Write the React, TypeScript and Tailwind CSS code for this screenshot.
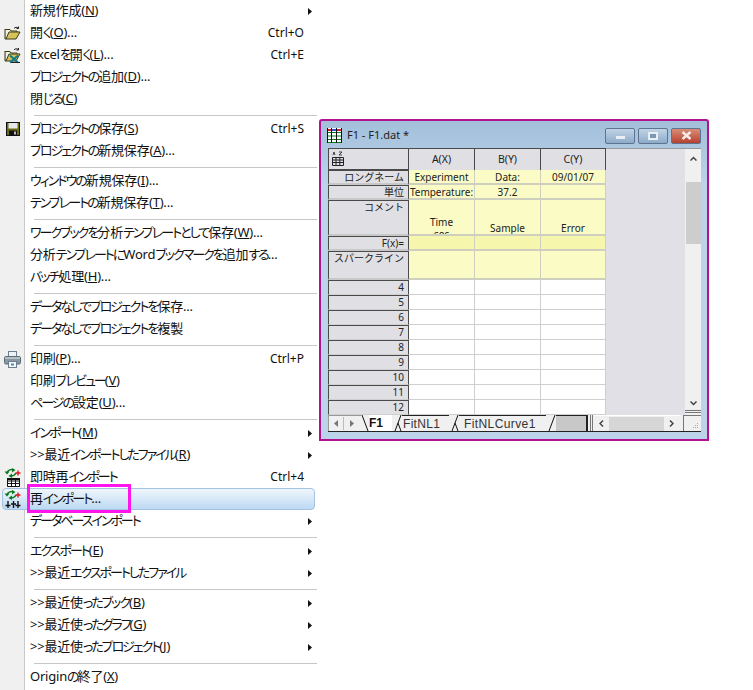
import React from "react";

type Item =
  | { sep: true }
  | { sep?: false; label: string; key2?: string; arrow?: boolean; icon?: React.ReactNode; active?: boolean };

const Folder = () => (
  <svg width="17" height="14" viewBox="0 0 17 14" className="shrink-0">
    <path d="M1 3.5h5l1 1.5h6v2" fill="#fff6b0" stroke="#3a3a10" />
    <path d="M1 3v10h11l4-7H5L2 13" fill="#d6c25a" stroke="#3a3a10" />
    <path d="M10 2.5c1-1.5 3-1.5 4.5-.5M14.5 0.5v2h-2" fill="none" stroke="#222" />
  </svg>
);
const ExcelFolder = () => (
  <svg width="17" height="17" viewBox="0 0 17 17" className="shrink-0">
    <path d="M1 4.5h5l1 1.5h6v2" fill="#fff6b0" stroke="#3a3a10" />
    <path d="M1 4v10h11l4-7H5L2 14" fill="#d6c25a" stroke="#3a3a10" />
    <path d="M10 3c1-1.5 3-1.5 4.5-.5M14.5 1v2h-2" fill="none" stroke="#222" />
    <path d="M6 8.5l8 7M14 8.5l-8 7" stroke="#0d7c8a" strokeWidth="2" />
    <path d="M7 15.5h9" stroke="#222" />
  </svg>
);
const Floppy = () => (
  <svg width="14" height="14" viewBox="0 0 14 14" className="shrink-0">
    <rect x="0.5" y="0.5" width="13" height="13" fill="#6b6b10" stroke="#111" />
    <rect x="2.5" y="1" width="9" height="5.5" fill="#e8e8e8" />
    <rect x="3" y="8.5" width="8" height="5" fill="#111" />
    <rect x="8" y="9.5" width="2" height="3" fill="#bbb" />
  </svg>
);
const Printer = () => (
  <svg width="17" height="17" viewBox="0 0 17 17" className="shrink-0">
    <rect x="4.5" y="0.5" width="8" height="6" fill="#eef2f5" stroke="#6d7f8c" />
    <rect x="0.5" y="5.5" width="16" height="7.5" rx="1.5" fill="#8b98a3" stroke="#5b6a75" />
    <rect x="1" y="6" width="15" height="2" fill="#b5bfc7" />
    <rect x="4.5" y="10.5" width="8" height="6" fill="#f3f6f8" stroke="#6d7f8c" />
    <rect x="7" y="12.5" width="3" height="2" fill="#3f8fd0" />
  </svg>
);
const Arrows = () => (
  <>
    <path d="M3 5c1-3 4-4 7-3" fill="none" stroke="#0a7a1c" strokeWidth="1.6" />
    <path d="M8 0l3.5 2L8 4.5z" fill="#0a7a1c" />
    <path d="M12 5c-1 2-3 3-5 3" fill="none" stroke="#0a7a1c" strokeWidth="1.6" />
    <path d="M8 5.5L4.5 8 8 10z" fill="#0a7a1c" />
    <path d="M0.5 3.5l2.5 3 2.5-3z" fill="#0a7a1c" />
    <path d="M14 2.5v5M11.5 5h5" stroke="#e01818" strokeWidth="1.4" />
  </>
);
const ReTable = () => (
  <svg width="17" height="19" viewBox="0 0 17 19" className="shrink-0">
    <Arrows />
    <path d="M3.5 10.5h12v8h-12zM3.5 13h12M3.5 15.5h12M7.5 10.5v8M11.5 10.5v8" fill="#fff" stroke="#111" />
    <rect x="3" y="10" width="13" height="2" fill="#111" />
  </svg>
);
const ReOptions = () => (
  <svg width="17" height="19" viewBox="0 0 17 19" className="shrink-0">
    <Arrows />
    <path d="M4 11v7M9.5 11v7M14 11v7M1.5 15.5h5M7 14h5M11.5 15.5h5" stroke="#111" strokeWidth="1.4" fill="none" />
  </svg>
);

const items: Item[] = [
  { label: "新規作成(N)", arrow: true },
  { label: "開く(O)...", key2: "Ctrl+O", icon: <Folder /> },
  { label: "Excelを開く(L)...", key2: "Ctrl+E", icon: <ExcelFolder /> },
  { label: "プロジェクトの追加(D)..." },
  { label: "閉じる(C)" },
  { sep: true },
  { label: "プロジェクトの保存(S)", key2: "Ctrl+S", icon: <Floppy /> },
  { label: "プロジェクトの新規保存(A)..." },
  { sep: true },
  { label: "ウィンドウの新規保存(I)..." },
  { label: "テンプレートの新規保存(T)..." },
  { sep: true },
  { label: "ワークブックを分析テンプレートとして保存(W)..." },
  { label: "分析テンプレートにWordブックマークを追加する..." },
  { label: "バッチ処理(H)..." },
  { sep: true },
  { label: "データなしでプロジェクトを保存..." },
  { label: "データなしでプロジェクトを複製" },
  { sep: true },
  { label: "印刷(P)...", key2: "Ctrl+P", icon: <Printer /> },
  { label: "印刷プレビュー(V)" },
  { label: "ページの設定(U)..." },
  { sep: true },
  { label: "インポート(M)", arrow: true },
  { label: ">>最近インポートしたファイル(R)", arrow: true },
  { label: "即時再インポート", key2: "Ctrl+4", icon: <ReTable /> },
  { label: "再インポート...", icon: <ReOptions />, active: true },
  { label: "データベースインポート", arrow: true },
  { sep: true },
  { label: "エクスポート(E)", arrow: true },
  { label: ">>最近エクスポートしたファイル", arrow: true },
  { sep: true },
  { label: ">>最近使ったブック(B)", arrow: true },
  { label: ">>最近使ったグラフ(G)", arrow: true },
  { label: ">>最近使ったプロジェクト(J)", arrow: true },
  { sep: true },
  { label: "Originの終了(X)" },
];

// Splits a label so the kana runs get the tight set of the reference and the mnemonic letter is underlined.
function Label({ text }: { text: string }) {
  const parts = text.split(/([ぁ-んァ-ヶィー]+|\([A-Z]\))/).filter(Boolean);
  return (
    <>
      {parts.map((p, i) => {
        if (/^\([A-Z]\)$/.test(p)) {
          return (
            <span key={i}>
              (<span className="underline">{p[1]}</span>)
            </span>
          );
        }
        if (/^[ぁ-んァ-ヶィー]/.test(p)) {
          return (
            <span key={i} className="tracking-[-2px]">
              {p}
            </span>
          );
        }
        return <span key={i}>{p}</span>;
      })}
    </>
  );
}

function MenuRow({ item }: { item: Item }) {
  if (item.sep) {
    return (
      <div className="flex h-2 pl-[25px]">
        <div className="ml-[9px] mt-[5px] h-px flex-1 bg-[#c6c6c6]" />
      </div>
    );
  }
  return (
    <div className="relative flex h-[22px] items-center">
      {item.active && (
        <div className="absolute left-[2px] top-0 h-[22px] w-[313px] rounded-[4px] border border-[#a4c3e2] bg-gradient-to-b from-[#f0f6fc] to-[#bcd9f3]" />
      )}
      <div className="relative flex h-full w-[25px] shrink-0 items-center justify-center">{item.icon}</div>
      <div className="relative ml-[5px] flex-1 whitespace-nowrap tracking-[-0.2px] [font-feature-settings:'palt']">
        <Label text={item.label} />
      </div>
      {item.key2 && <div className="relative mr-[13px] text-[12px]">{item.key2}</div>}
      {item.arrow && (
        <svg width="4" height="7" viewBox="0 0 4 7" className="relative mr-[5px]">
          <path d="M0 0l4 3.5L0 7z" fill="#111" />
        </svg>
      )}
    </div>
  );
}

function Menu() {
  return (
    <div className="relative w-[317px] shrink-0 bg-[linear-gradient(to_right,#f0f0f0_24px,#c8c8c8_24px,#c8c8c8_25px,#fff_25px)]">
      {items.map((it, i) => (
        <MenuRow key={i} item={it} />
      ))}
      <div className="absolute left-[27px] top-[484px] h-[29px] w-[104px] border-[3px] border-[#ff14ee]" />
    </div>
  );
}

const headCell = "border-t border-l border-r border-[#4a4a4a] border-b-2 border-b-[#c8c8c8] bg-[#dfdfe4] pr-[4px] text-right leading-[12px] text-[#222] overflow-hidden";
const numCell = "border-t border-l border-r border-[#4a4a4a] border-b border-b-[#cfcfcf] bg-[#dfdfe4] pr-[4px] text-right leading-[13px] text-[#222] overflow-hidden";
const col = "flex items-center justify-center border-t border-r border-[#4a4a4a] bg-[#dfdfe4] text-[#222] text-[10.5px]";
const yellow = "flex justify-center overflow-hidden border-r border-b-2 border-[#cfcfc0] bg-[#fbfbc6] leading-[14px] text-[#222]";
const fx = "border-r border-b-2 border-[#cfcfc0] bg-[#f6f6ac]";
const white = "border-r border-b border-[#cfcfcf] bg-white";

function Sheet() {
  const rows = ["4", "5", "6", "7", "8", "9", "10", "11", "12"];
  return (
    <div className="grid w-[278px] grid-cols-[81px_66px_66px_65px] grid-rows-[22px_15px_15px_36px_15px_29px_repeat(9,15px)] font-['Noto_Sans','Noto_Sans_CJK_JP',sans-serif] text-[10px]">
      <div className="flex items-start border border-[#4a4a4a] bg-[#dfdfe4] pl-[2px] pt-[2px]">
        <svg width="14" height="15" viewBox="0 0 14 15">
          <path d="M1.5 6.5h11v8h-11zM1.5 9h11M1.5 11.5h11M5 6.5v8M8.8 6.5v8" fill="none" stroke="#222" />
          <path d="M2 4l1-3 1 3M8 1h3l-3 3h3" fill="none" stroke="#222" strokeWidth="0.8" />
        </svg>
      </div>
      <div className={col}>A(X)</div>
      <div className={col}>B(Y)</div>
      <div className={col}>C(Y)</div>

      <div className={headCell}>ロングネーム</div>
      <div className={yellow}>Experiment</div>
      <div className={yellow}>Data:</div>
      <div className={yellow}>09/01/07</div>

      <div className={headCell}>単位</div>
      <div className={yellow}>Temperature:</div>
      <div className={yellow}>37.2</div>
      <div className={yellow} />

      <div className={headCell}>コメント</div>
      <div className={`${yellow} pt-[16px] text-center !leading-[12px]`}>
        Time
        <br />
        sec
      </div>
      <div className={`${yellow} pt-[21px]`}>Sample</div>
      <div className={`${yellow} pt-[21px]`}>Error</div>

      <div className={headCell}>F(x)=</div>
      <div className={fx} />
      <div className={fx} />
      <div className={fx} />

      <div className={headCell}>スパークライン</div>
      <div className={yellow} />
      <div className={yellow} />
      <div className={yellow} />

      {rows.map((r) => (
        <React.Fragment key={r}>
          <div className={numCell}>{r}</div>
          <div className={white} />
          <div className={white} />
          <div className={white} />
        </React.Fragment>
      ))}
    </div>
  );
}

const Chev = ({ up }: { up?: boolean }) => (
  <svg width="7" height="5" viewBox="0 0 7 5">
    <path d={up ? "M0.5 4.5L3.5 1.5l3 3" : "M0.5 0.5l3 3 3-3"} fill="none" stroke="#444" strokeWidth="1.5" />
  </svg>
);
const ChevH = ({ left }: { left?: boolean }) => (
  <svg width="5" height="7" viewBox="0 0 5 7">
    <path d={left ? "M4 0.5l-3 3 3 3" : "M1 0.5l3 3-3 3"} fill="none" stroke="#444" strokeWidth="1.5" />
  </svg>
);
const Slant = ({ flip, double }: { flip?: boolean; double?: boolean }) => (
  <svg width="10" height="16" viewBox="0 0 10 16" className="shrink-0">
    <path d={flip ? "M9 0L3 16" : "M1 0l6 16"} fill="none" stroke="#111" />
    {double && <path d="M6 8l3 8" fill="none" stroke="#111" />}
  </svg>
);

function WinBtn({ children, red }: { children: React.ReactNode; red?: boolean }) {
  return (
    <div
      className={`flex h-[16px] w-[30px] items-center justify-center rounded-[2px] border border-[#5d7390] ${
        red ? "bg-gradient-to-b from-[#d98c78] to-[#b5402f]" : "bg-gradient-to-b from-[#c2d4e6] to-[#8dabc9]"
      }`}
    >
      {children}
    </div>
  );
}

function Window() {
  return (
    <div className="ml-[2px] mt-[119px] flex h-[322px] w-[390px] flex-col self-start rounded-t-[3px] border-2 border-[#b2118f] bg-[#bbd2ea] bg-gradient-to-b from-[#a3bfda] from-0% to-[#bcd3ea] to-20%">
      <div className="flex h-[27px] shrink-0 items-center pl-[6px] pr-[6px] pt-[2px]">
        <svg width="15" height="15" viewBox="0 0 15 15" className="shrink-0">
          <rect x="0" y="0" width="15" height="15" fill="#fff" />
          <path d="M0 4.5h15M0 8h15M0 11.5h15M0 14.5h15" stroke="#0a7a1c" />
          <path d="M0.5 0v15M4.5 0v15M9.5 0v15M14.5 0v15" stroke="#111" />
          <rect x="1" y="1" width="3" height="2" fill="#d02030" />
          <rect x="5" y="1" width="4" height="2" fill="#3050d0" />
          <rect x="10" y="1" width="4" height="2" fill="#d02030" />
        </svg>
        <span className="ml-[5px] flex-1 font-['Noto_Sans',sans-serif] text-[11px] text-[#222]">F1 - F1.dat *</span>
        <div className="flex gap-[3px]">
          <WinBtn>
            <div className="mt-[4px] h-[3px] w-[9px] bg-[#e8eef4]" />
          </WinBtn>
          <WinBtn>
            <div className="h-[8px] w-[10px] border-2 border-[#e8eef4] bg-[#7d98b3]" />
          </WinBtn>
          <WinBtn red>
            <svg width="11" height="9" viewBox="0 0 11 9">
              <path d="M1.5 1l8 7M9.5 1l-8 7" stroke="#f4ece8" strokeWidth="2.4" />
            </svg>
          </WinBtn>
        </div>
      </div>
      <div className="ml-[7px] mr-[6px] flex h-[284px] shrink-0 flex-col bg-[#e0e0e6]">
        <div className="flex h-[267px] shrink-0">
          <Sheet />
          <div className="flex-1 border-t border-[#9a9a9a]" />
          <div className="flex w-[16px] shrink-0 flex-col items-center border-t border-[#9a9a9a] bg-[#f0f0f0] pt-[7px]">
            <Chev up />
            <div className="mt-[21px] h-[62px] w-[15px] bg-[#cdcdcd]" />
            <div className="flex-1" />
            <Chev />
            <div className="mt-[4px] h-[3px] w-[16px] border-y border-[#777]" />
            <div className="h-[2px]" />
          </div>
        </div>
        <div className="flex h-[17px] shrink-0 items-stretch border-b border-[#222] bg-[#f0f0f0] font-['Liberation_Sans',sans-serif] text-[12px] text-[#333]">
          <div className="flex w-[33px] shrink-0 items-center border-l border-t border-[#999]">
            <div className="flex h-[13px] w-[15px] items-center justify-center border-r border-[#bbb]">
              <svg width="4" height="7" viewBox="0 0 4 7"><path d="M4 0L0 3.5 4 7z" fill="#777" /></svg>
            </div>
            <div className="flex h-[13px] w-[15px] items-center justify-center">
              <svg width="4" height="7" viewBox="0 0 4 7"><path d="M0 0l4 3.5L0 7z" fill="#777" /></svg>
            </div>
          </div>
          <Slant />
          <div className="-ml-[2px] flex w-[23px] shrink-0 items-center bg-white font-bold text-[#111]">F1</div>
          <Slant flip double />
          <div className="flex w-[47px] shrink-0 items-center border-t border-[#222] pl-[1px] tracking-[0.3px]">FitNL1</div>
          <Slant flip double />
          <div className="flex w-[87px] shrink-0 items-center border-t border-[#222] pl-[5px] tracking-[0.4px]">FitNLCurve1</div>
          <Slant flip />
          <div className="w-[32px] shrink-0 border-t border-r-2 border-[#222] bg-[#c8c8c8]" />
          <div className="ml-[2px] w-[3px] shrink-0 border-x border-[#777]" />
          <div className="flex w-[87px] shrink-0 items-center justify-between border-t border-[#fff] bg-[#f0f0f0] px-[6px]">
            <ChevH left />
            <div className="mx-[5px] h-[14px] flex-1 bg-[#d6d6d6]" />
            <ChevH />
          </div>
          <div className="ml-[3px] flex flex-1 items-end justify-end border-l border-t border-[#777] pb-[2px] pr-[2px]">
            <svg width="7" height="7" viewBox="0 0 7 7">
              <path d="M5 1h1v1H5zM3 3h1v1H3zM5 3h1v1H5zM1 5h1v1H1zM3 5h1v1H3zM5 5h1v1H5z" fill="#aaa" />
            </svg>
          </div>
        </div>
      </div>
    </div>
  );
}

export default function App() {
  return (
    <div className="flex h-[690px] w-[753px] overflow-hidden bg-white font-['Noto_Sans','Noto_Sans_CJK_JP',sans-serif] text-[13px] text-[#111]">
      <Menu />
      <Window />
    </div>
  );
}
